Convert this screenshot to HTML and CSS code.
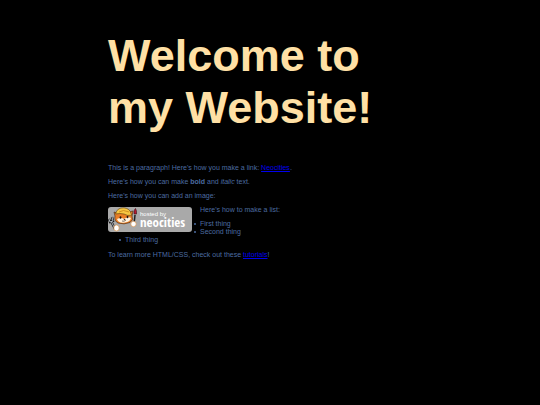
FILE: index.html
```
<!DOCTYPE html>
<html lang="en">
	<head>
		<meta charset="utf-8" />
		<meta name="viewport" content="width=device-width, initial-scale=1" />
		<title>My Website</title>
		<link rel="stylesheet" href="styles.css">
	</head>
	<body>
		<main class="page">
			<h1 class="title">Welcome to my Website!</h1>

			<p>This is a paragraph! Here's how you make a link: <a href="https://neocities.org">Neocities</a>.</p>

			<p>Here's how you can make <strong>bold</strong> and <em>italic</em> text.</p>

			<p>Here's how you can add an image:</p>
			<svg class="badge" viewBox="0 0 84 25" role="img" aria-label="hosted by neocities">
				<rect width="84" height="25" rx="3" fill="#a9a9a9" />
				<!-- fork -->
				<path d="M1 12l1 3 3-1-1-4M3 14l4 8" stroke="#1c1c1c" stroke-width="2.400" fill="none" />
				<path d="M1 12l1 3 3-1-1-4M3 14l4 8" stroke="#b9c1c8" stroke-width=".9" fill="none" />
				<!-- cat -->
				<path d="M7 9L6 5l3 1q6-4 12-1l4-1-1 5q2 4-2 6.500-6 2.500-12 .5Q6 14 7 9z" fill="#e87d25" stroke="#3b2414" stroke-width=".6" />
				<path d="M9 12q4-2 7 0 4-3 7-1-1 4-6 4.500Q10 16.500 9 12z" fill="#fff3df" />
				<path d="M7.500 7Q9 .5 16 .8q6 .8 7 5.700l1 1.700q-5 1-8-1.200-4-1-8.500 0z" fill="#f7c743" stroke="#5b3a0c" stroke-width=".6" />
				<path d="M11 5q4-3 10 0" stroke="#c98519" stroke-width=".8" fill="none" />
				<ellipse cx="12.500" cy="10.500" rx=".9" ry="1.300" fill="#201510" />
				<ellipse cx="19.500" cy="10" rx=".9" ry="1.300" fill="#201510" />
				<path d="M15.500 12h2l-1 1.200z" fill="#301a12" />
				<path d="M14 14q2 1 4-1" fill="none" stroke="#301a12" stroke-width=".6" />
				<!-- brush -->
				<path d="M27 8l-1 9" stroke="#202020" stroke-width="1.500" />
				<path d="M26 7q-.500-4 1.500-5.500Q29 4 28.500 7z" fill="#b51b32" stroke="#3a1019" stroke-width=".6" />
				<!-- paws -->
				<ellipse cx="8.500" cy="21" rx="2.700" ry="3" fill="#fff" stroke="#d88a3a" stroke-width=".6" />
				<ellipse cx="25.500" cy="17" rx="2.700" ry="2.700" fill="#fff" stroke="#d88a3a" stroke-width=".6" />
				<text class="badge-small" x="32" y="9">hosted by</text>
				<text class="badge-name" x="32" y="20">neocities</text>
			</svg>

			<p>Here's how to make a list:</p>

			<ul class="list">
				<li>First thing</li>
				<li>Second thing</li>
				<li>Third thing</li>
			</ul>

			<p>To learn more HTML/CSS, check out these <a href="https://neocities.org/tutorials">tutorials</a>!</p>
		</main>
	</body>
</html>
```

FILE: styles.css
```
body {
	margin: 0;
	background-color: #000;
	color: #4c6ca0;
	font: 7px/8px "Liberation Sans", Arial, sans-serif;
}
.page {
	width: 60%; margin: 0 auto;
	padding-top: 30px;
}
.title {
	margin: 0 0 30px;
	color: #ffe0a5;
	font-size: 45px;
	line-height: 52px;
}
p {
	margin: 0 0 6px;
}
a {
	color: #0000ee;
}
.badge {
	float: left;
	width: 84px; height: 25px; margin: 1px 8px 0 0;
}
.badge-small {
	fill: #fff;
	font: 6px "Liberation Sans", Arial, sans-serif;
}
.badge-name {
	fill: #fff;
	font: 13px "Liberation Sans Narrow", "Open Sans Condensed", Lato, sans-serif;
}
.list {
	margin: 0 0 7px;
	padding-left: 17px;
	list-style: none;
}
.list li::before {
	content: "";
	display: inline-block;
	width: 2px; height: 2px; margin: 0 4px 1px -6px;
	border-radius: 50%;
	background-color: #4c6ca0;
}
```
